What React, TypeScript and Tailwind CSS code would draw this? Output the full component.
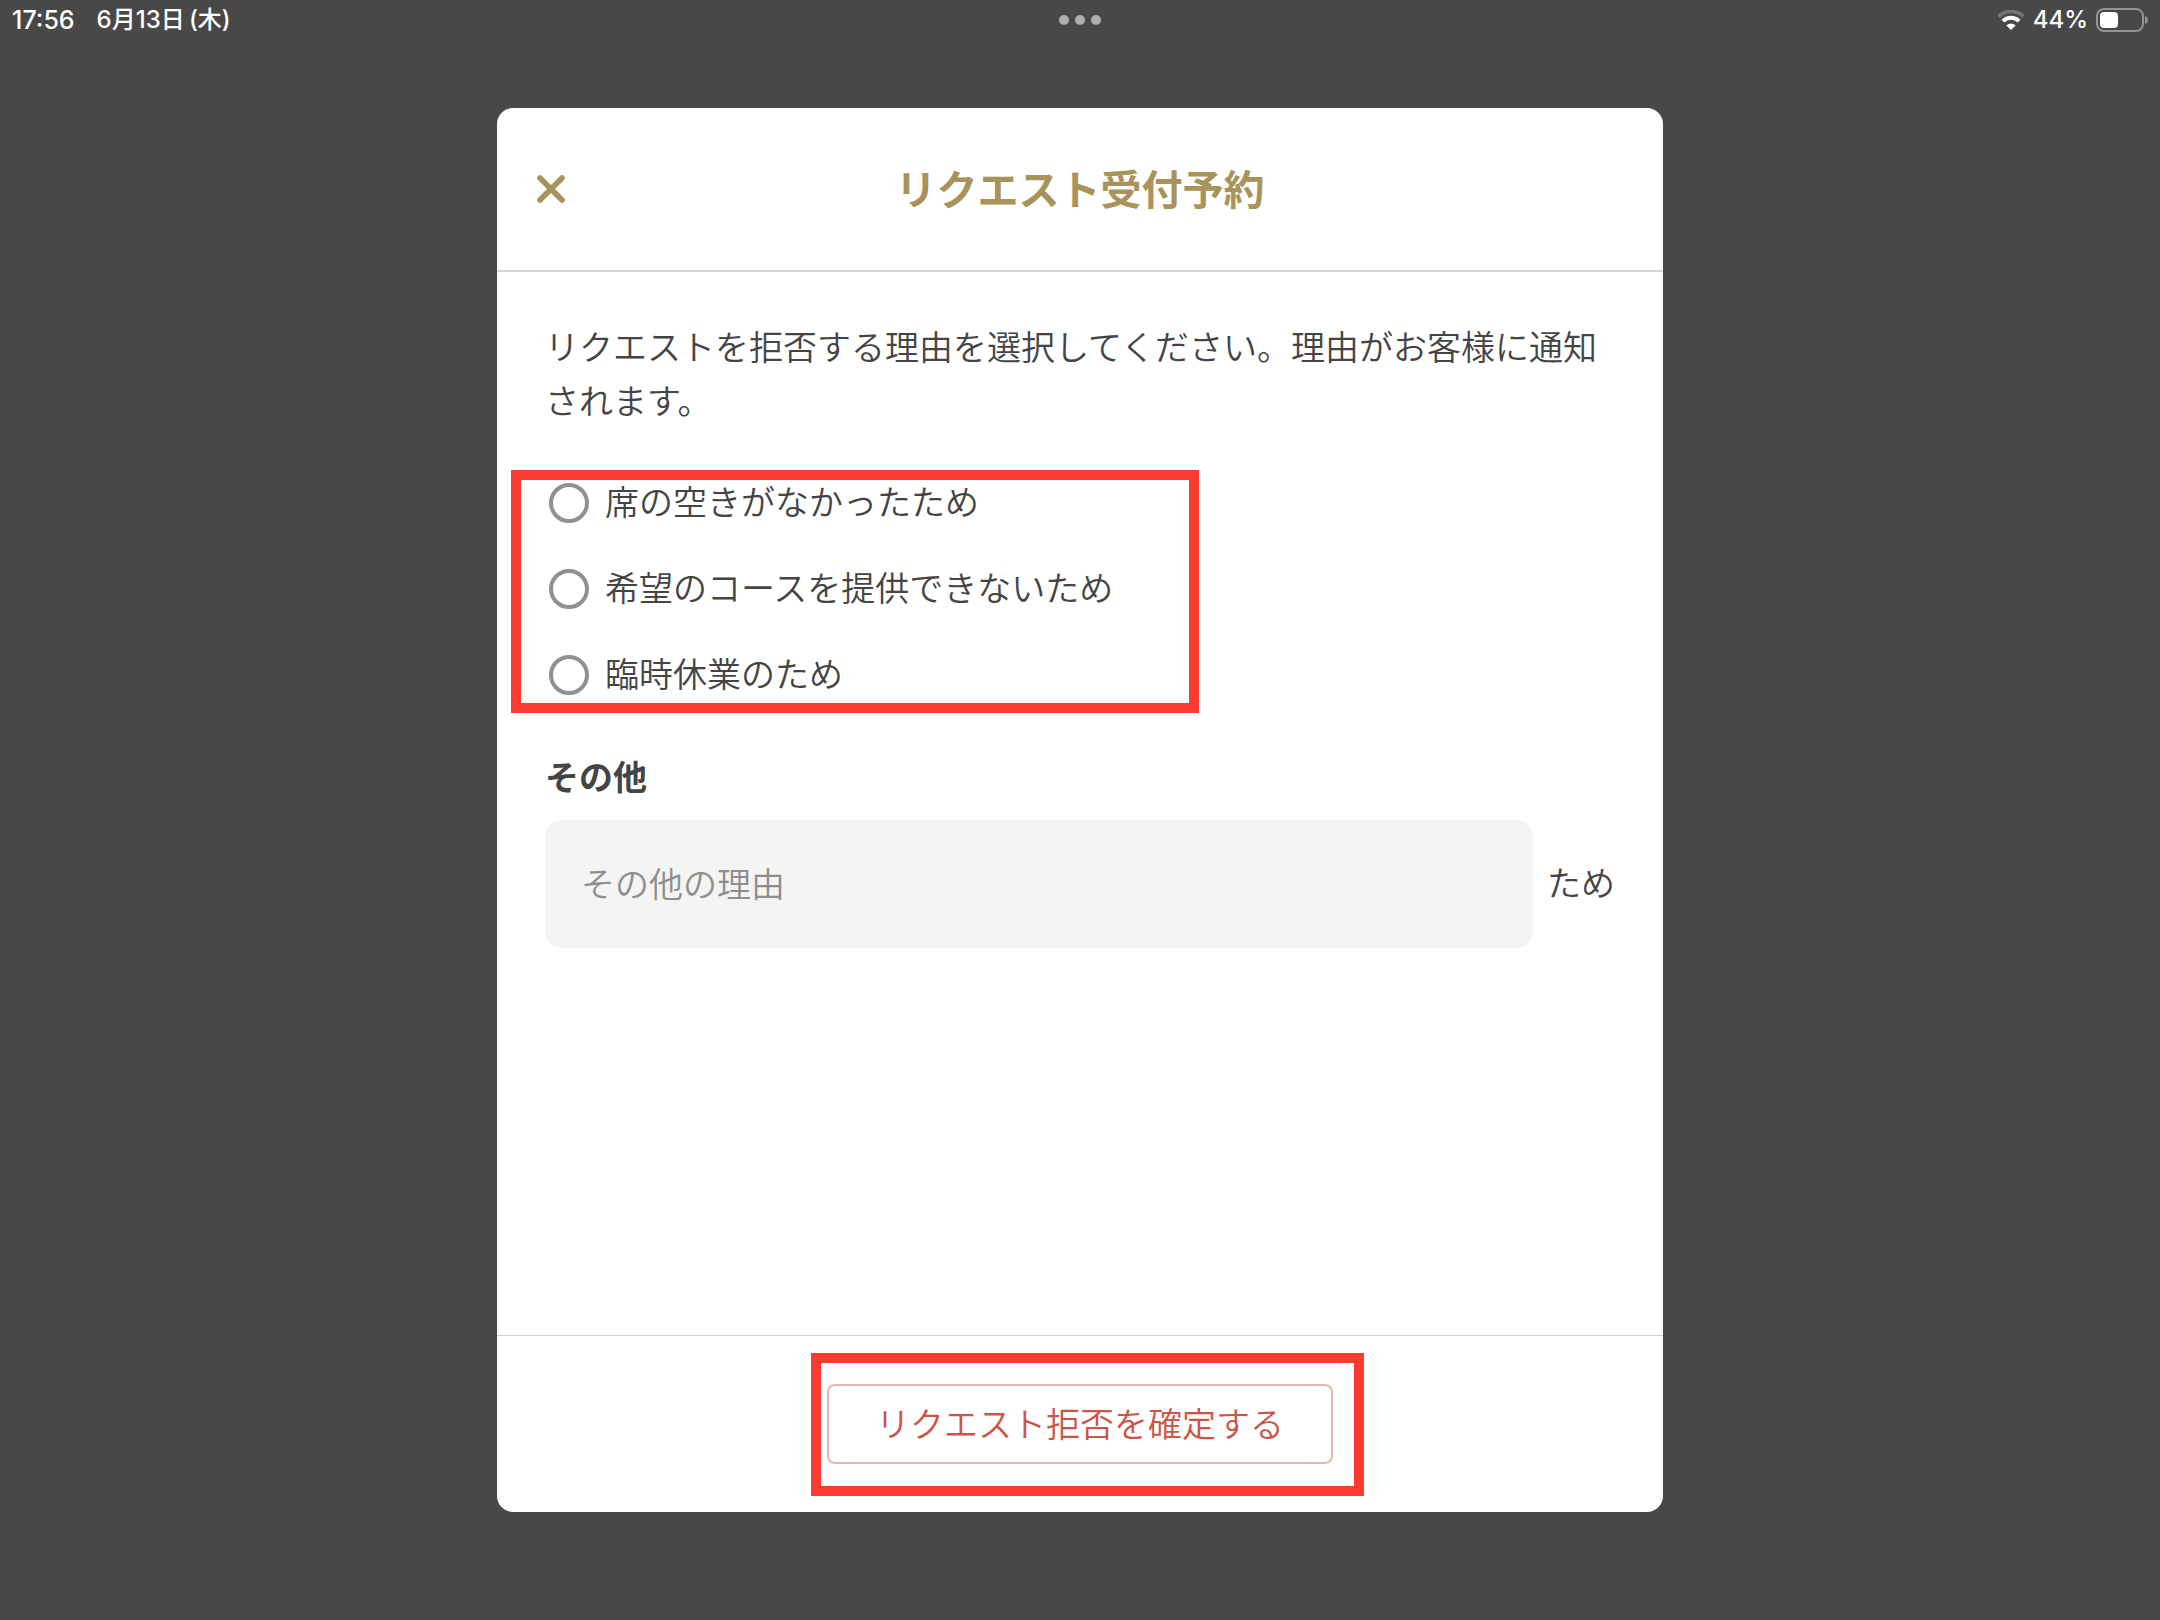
const reasons = [
  { id: "full", label: "席の空きがなかったため" },
  { id: "course", label: "希望のコースを提供できないため" },
  { id: "closed", label: "臨時休業のため" },
];

function StatusBar() {
  return (
    <header className="grid h-10 grid-cols-3 items-center px-3 font-['Inter','Noto_Sans_CJK_JP',sans-serif] text-[25px] leading-10 font-medium text-white">
      <div className="flex items-center gap-[22px]">
        <span>17:56</span>
        <span className="text-2xl leading-10">6月13日{"\u2009"}(木)</span>
      </div>
      <div className="flex items-center justify-center gap-1.5">
        <span className="size-2.5 rounded-full bg-[#aeaeae]" />
        <span className="size-2.5 rounded-full bg-[#aeaeae]" />
        <span className="size-2.5 rounded-full bg-[#aeaeae]" />
      </div>
      <div className="flex items-center justify-end gap-2">
        <svg width="28" height="20" viewBox="0 0 28 20" fill="none" aria-label="Wi-Fi">
          <path d="M1.6 6.6a17.6 17.6 0 0 1 24.8 0" stroke="#757575" strokeWidth="3.6" />
          <path d="M5.9 11.2a11.5 11.5 0 0 1 16.2 0" stroke="#fff" strokeWidth="4" />
          <path d="M14 20l-4.6-4.6a6.6 6.6 0 0 1 9.2 0z" fill="#fff" />
        </svg>
        <span className="text-2xl leading-10">44%</span>
        <svg width="52" height="24" viewBox="0 0 52 24" fill="none" aria-label="バッテリー">
          <rect x="1" y="1" width="46" height="22" rx="7" stroke="#949494" strokeWidth="2" />
          <rect x="4" y="4" width="18" height="16" rx="4" fill="#fff" />
          <path d="M49 8c4 1.2 4 6.8 0 8z" fill="#949494" />
        </svg>
      </div>
    </header>
  );
}

export default function App() {
  return (
    <div className="flex min-h-screen flex-col bg-[#484848] font-['Noto_Sans_CJK_JP',sans-serif] text-[34px] font-[350] text-[#444]">
      <StatusBar />
      <main className="flex flex-1 justify-center px-6 pt-[68px] pb-[108px]">
        <form
          role="dialog"
          aria-labelledby="dialog-title"
          className="flex w-full max-w-[1166px] flex-col rounded-2xl bg-white"
          onSubmit={(e) => e.preventDefault()}
        >
          <div className="grid h-[164px] grid-cols-[1fr_auto_1fr] items-center border-b-2 border-[#d6d6d6] px-10 text-[#a8935a]">
            <button type="button" aria-label="閉じる" className="justify-self-start">
              <svg width="28" height="28" viewBox="0 0 28 28" fill="none" stroke="currentColor" strokeWidth="5.6" strokeLinecap="round">
                <path d="M3 3l22 22M25 3L3 25" />
              </svg>
            </button>
            <h1 id="dialog-title" className="pb-1 text-[41px] leading-[60px] font-bold">
              リクエスト受付予約
            </h1>
          </div>

          <div className="flex-1 px-12 pt-[47px]">
            <p className="leading-[54px]">
              リクエストを拒否する理由を選択してください。理由がお客様に通知されます。
            </p>

            <div
              role="radiogroup"
              aria-label="拒否する理由"
              className="relative mt-14 flex flex-col gap-[46px]"
            >
              {reasons.map((r) => (
                <label key={r.id} htmlFor={r.id} className="flex h-10 items-center gap-4 pl-1">
                  <input
                    id={r.id}
                    type="radio"
                    name="reason"
                    className="size-10 shrink-0 appearance-none rounded-full border-4 border-[#909090] bg-white checked:border-[12px] checked:border-[#a8935a]"
                  />
                  <span className="pb-1 leading-[54px]">{r.label}</span>
                </label>
              ))}
              <div className="pointer-events-none absolute -top-[13px] -bottom-[18px] -left-[34px] w-[688px] border-10 border-[#fb3b30]" />
            </div>

            <label htmlFor="other" className="mt-[54px] block leading-[54px] font-bold">
              その他
            </label>
            <div className="mt-[17px] flex items-center gap-3.5">
              <input
                id="other"
                type="text"
                placeholder="その他の理由"
                className="h-32 min-w-0 flex-1 rounded-2xl bg-[#f4f4f4] px-9 pb-1 placeholder:text-[#8e8e8e]"
              />
              <span className="pb-1 leading-[54px]">ため</span>
            </div>
          </div>

          <div className="flex h-[177px] items-center justify-center border-t border-[#d0d0d0]">
            <div className="relative">
              <button
                type="submit"
                className="h-20 rounded-lg border-2 border-[#e5b5af] px-[47px] pb-1 text-[#cb5546]"
              >
                リクエスト拒否を確定する
              </button>
              <div className="pointer-events-none absolute -top-[31px] -right-[31px] -bottom-8 -left-4 border-10 border-[#fb3b30]" />
            </div>
          </div>
        </form>
      </main>
    </div>
  );
}
